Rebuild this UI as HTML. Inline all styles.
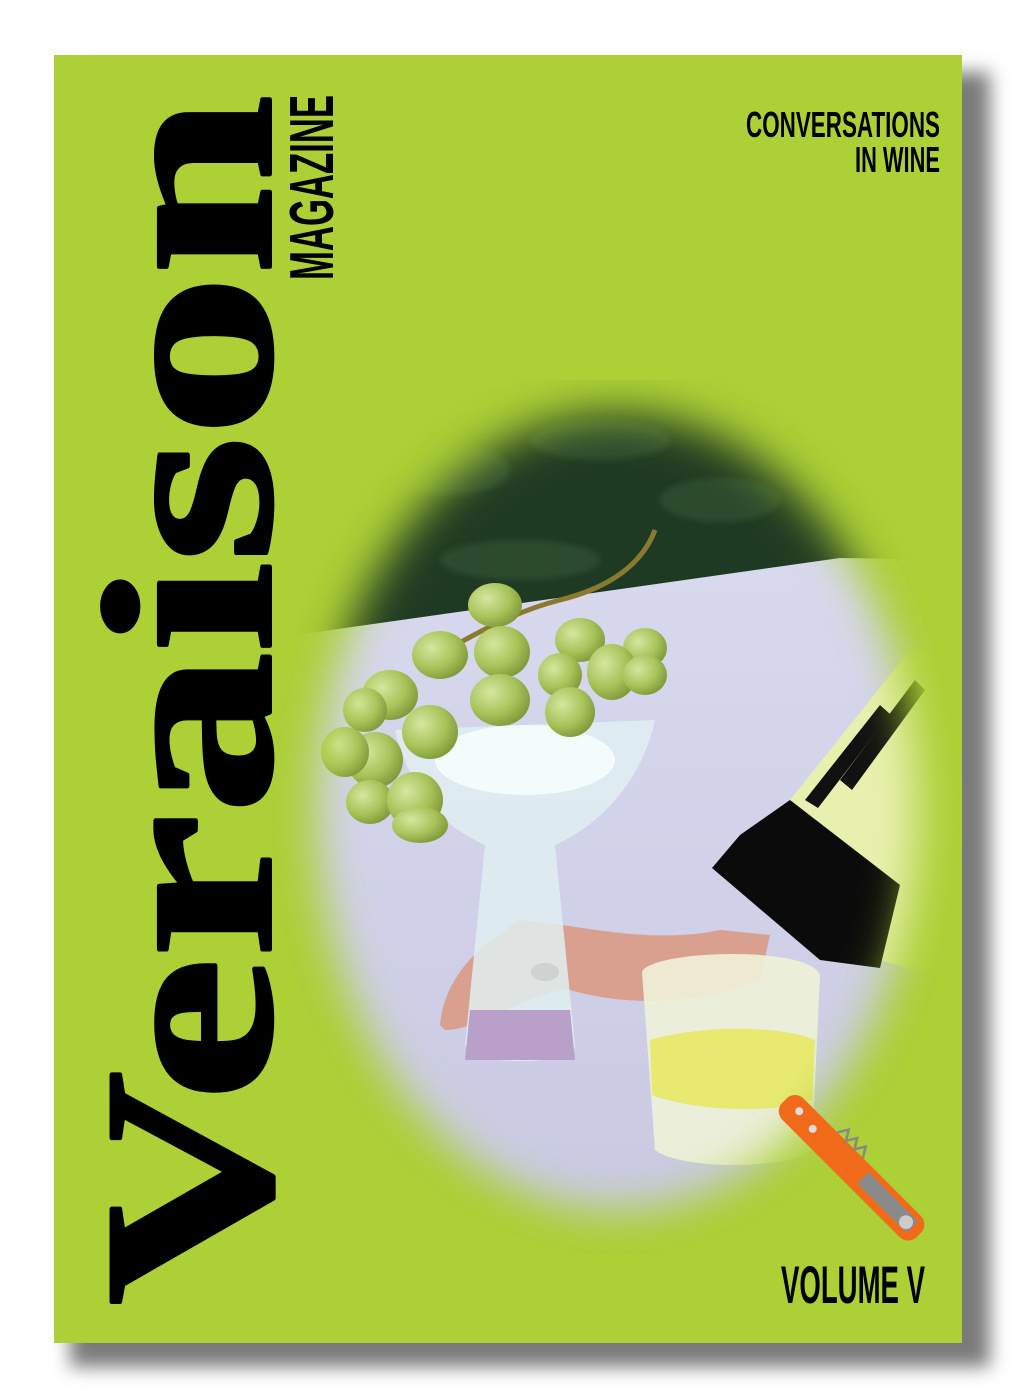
<!DOCTYPE html>
<html><head><meta charset="utf-8"><style>
html,body{margin:0;padding:0;background:#fff;}
svg{display:block;}
</style></head><body>
<svg width="1017" height="1398" viewBox="0 0 1017 1398" xmlns="http://www.w3.org/2000/svg">
<defs>
<filter id="sh" x="-10%" y="-10%" width="120%" height="120%"><feGaussianBlur stdDeviation="9"/></filter>
<filter id="fb" x="-20%" y="-20%" width="140%" height="140%"><feGaussianBlur stdDeviation="22"/></filter>
<filter id="sb"><feGaussianBlur stdDeviation="3"/></filter>
<mask id="m"><ellipse cx="617" cy="812" rx="300" ry="398" fill="#fff" filter="url(#fb)"/></mask>
<radialGradient id="gr" cx="0.35" cy="0.35" r="0.7"><stop offset="0" stop-color="#d6e6a0"/><stop offset="0.6" stop-color="#a8c45a"/><stop offset="1" stop-color="#7f9a3a"/></radialGradient>
<linearGradient id="tab" x1="0" y1="0" x2="0" y2="1"><stop offset="0" stop-color="#d8d8ee"/><stop offset="1" stop-color="#c8c8e2"/></linearGradient>
</defs>
<rect x="70" y="72" width="920" height="1295" fill="#7a7a7a" filter="url(#sh)"/>
<rect x="54" y="55" width="908" height="1288" fill="#acd036"/>

<g mask="url(#m)">
  <rect x="260" y="380" width="720" height="880" fill="#acd036"/>
  <rect x="260" y="380" width="720" height="260" fill="#1f3a22"/>
  <g fill="#2e5030" opacity="0.8" filter="url(#sb)">
    <ellipse cx="450" cy="470" rx="60" ry="25"/><ellipse cx="600" cy="440" rx="70" ry="20"/>
    <ellipse cx="720" cy="500" rx="60" ry="22"/><ellipse cx="520" cy="560" rx="80" ry="20"/>
  </g>
  <polygon points="260,640 840,558 980,560 980,1260 260,1260" fill="url(#tab)"/>
  <!-- sleeve -->
  <polygon points="790,800 910,650 980,650 980,990 880,960" fill="#e8f0b0"/>
  <polygon points="840,780 915,680 925,690 852,790" fill="#111"/>
  <polygon points="805,800 880,705 890,714 818,808" fill="#111"/>
  <path d="M712,868 L740,835 L790,800 L900,885 L880,968 L820,960 Z" fill="#0b0b0b"/>
  <!-- hand -->
  <path d="M440,1025 C445,975 480,945 520,920 C580,925 650,945 720,930 L770,935 L760,980 C710,1000 640,1010 570,990 C530,990 480,1030 445,1030 Z" fill="#d9a090"/>
  <ellipse cx="545" cy="972" rx="14" ry="9" fill="#6a2a10"/>
  <!-- glass -->
  <path d="M395,730 L655,720 C640,790 590,830 555,845 L575,1045 C580,1065 470,1068 465,1045 L485,845 C440,825 410,790 395,730 Z" fill="#dff0f2" opacity="0.85"/>
  <path d="M470,1010 L570,1010 L575,1060 L465,1060 Z" fill="#b8a0c8"/>
  <ellipse cx="525" cy="760" rx="90" ry="35" fill="#f4fbfb"/>
  <!-- grapes -->
  <path d="M655,530 C640,570 600,590 560,600 C520,610 480,630 430,660" stroke="#8a7a30" stroke-width="5" fill="none"/>
  <g fill="url(#gr)">
    <ellipse cx="495" cy="605" rx="27" ry="22"/><ellipse cx="440" cy="655" rx="28" ry="24"/>
    <ellipse cx="502" cy="652" rx="28" ry="26"/><ellipse cx="580" cy="640" rx="25" ry="22"/>
    <ellipse cx="645" cy="648" rx="22" ry="20"/><ellipse cx="612" cy="672" rx="25" ry="28"/>
    <ellipse cx="645" cy="675" rx="22" ry="20"/><ellipse cx="560" cy="675" rx="22" ry="22"/>
    <ellipse cx="500" cy="700" rx="30" ry="26"/><ellipse cx="570" cy="712" rx="25" ry="25"/>
    <ellipse cx="390" cy="695" rx="28" ry="25"/><ellipse cx="365" cy="710" rx="22" ry="22"/>
    <ellipse cx="430" cy="732" rx="28" ry="27"/><ellipse cx="375" cy="760" rx="28" ry="28"/>
    <ellipse cx="345" cy="752" rx="24" ry="25"/><ellipse cx="370" cy="802" rx="24" ry="22"/>
    <ellipse cx="415" cy="800" rx="28" ry="28"/><ellipse cx="420" cy="825" rx="28" ry="18"/>
  </g>
  <!-- small glass -->
  <path d="M642,972 C650,950 810,945 820,975 L812,1150 C790,1170 680,1170 655,1150 Z" fill="#eef2d8" opacity="0.9"/>
  <path d="M650,1040 C700,1025 780,1025 815,1040 L812,1100 C770,1115 690,1110 652,1095 Z" fill="#e8ea70"/>
</g>

<!-- corkscrew -->
<g transform="translate(795,1090) rotate(45)">
  <rect x="0" y="0" width="190" height="30" rx="12" fill="#f06a1a"/>
  <circle cx="18" cy="12" r="4" fill="#ddd"/><circle cx="40" cy="15" r="4" fill="#ddd"/>
  <rect x="110" y="6" width="70" height="16" fill="#8a8a8a"/>
  <circle cx="172" cy="15" r="7" fill="#ccc"/>
  <path d="M60,0 l6,-10 l6,10 l6,-10 l6,10 l6,-10 l6,10" stroke="#888" stroke-width="2.5" fill="none"/>
</g>

<text transform="translate(270,1305) rotate(-90)" font-family="Liberation Serif, serif" font-weight="bold" font-size="242" textLength="1210" lengthAdjust="spacingAndGlyphs" fill="#000" stroke="#000" stroke-width="4" stroke-linejoin="round">Veraison</text>
<text transform="translate(333,280) rotate(-90)" font-family="Liberation Sans, sans-serif" font-weight="bold" font-size="62" textLength="185" lengthAdjust="spacingAndGlyphs" fill="#000">MAGAZINE</text>
<text x="940" y="137" text-anchor="end" font-family="Liberation Sans, sans-serif" font-weight="bold" font-size="36" textLength="194" lengthAdjust="spacingAndGlyphs" fill="#000">CONVERSATIONS</text>
<text x="940" y="172" text-anchor="end" font-family="Liberation Sans, sans-serif" font-weight="bold" font-size="36" textLength="85" lengthAdjust="spacingAndGlyphs" fill="#000">IN WINE</text>
<text x="925" y="1303" text-anchor="end" font-family="Liberation Sans, sans-serif" font-weight="bold" font-size="53" textLength="144" lengthAdjust="spacingAndGlyphs" fill="#000">VOLUME V</text>
</svg>
</body></html>
